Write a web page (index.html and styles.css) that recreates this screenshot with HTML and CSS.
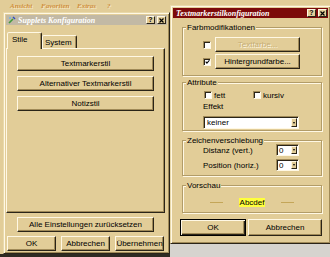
FILE: index.html
```html
<!DOCTYPE html>
<html lang="de">

<head>
  <meta charset="UTF-8">
  <title>Supplets Konfiguration</title>
  <link rel="stylesheet" href="styles.css">
</head>

<body>
  <div class="menubar">
    <span class="menu-item m1">Ansicht</span>
    <span class="menu-item m2">Favoriten</span>
    <span class="menu-item m3">Extras</span>
    <span class="menu-item">?</span>
  </div>
  <div class="desk-bottom">
    <div class="taskbar-edge"></div>
    <div class="page-grey"></div>
  </div>

  <!-- main dialog -->
  <div class="window config-window">
    <div class="titlebar inactive">
      <svg class="app-icon" width="8" height="8" viewBox="0 0 8 8">
        <path d="M1 7 L5 3" stroke="#3f9a3a" stroke-width="1.6" />
        <path d="M5 1 L7 3" stroke="#2f4fc0" stroke-width="1.4" />
        <circle cx="2" cy="2" r="1" fill="#6cb8e8" />
      </svg>
      <span class="title-text">Supplets Konfiguration</span>
      <span class="title-btn">?</span>
      <span class="title-btn">
        <svg width="5" height="5" viewBox="0 0 5 5"><path d="M0.5 0.5 L4.5 4.5 M4.5 0.5 L0.5 4.5" stroke="#000" stroke-width="1.2" /></svg>
      </span>
    </div>
    <div class="tabs">
      <div class="tab active">Stile</div>
      <div class="tab">System</div>
    </div>
    <div class="tab-panel">
      <button class="btn wide">Textmarkerstil</button>
      <button class="btn wide">Alternativer Textmarkerstil</button>
      <button class="btn wide">Notizstil</button>
    </div>
    <button class="btn wide reset">Alle Einstellungen zurücksetzen</button>
    <div class="dialog-buttons">
      <button class="btn small">OK</button>
      <button class="btn small">Abbrechen</button>
      <button class="btn small">Übernehmen</button>
    </div>
  </div>

  <!-- style dialog -->
  <div class="window style-window">
    <div class="titlebar active-title">
      <span class="title-text">Textmarkerstilkonfiguration</span>
      <span class="title-btn">?</span>
      <span class="title-btn">
        <svg width="5" height="5" viewBox="0 0 5 5"><path d="M0.5 0.5 L4.5 4.5 M4.5 0.5 L0.5 4.5" stroke="#000" stroke-width="1.2" /></svg>
      </span>
    </div>

    <div class="group colors">
      <span class="group-title">Farbmodifikationen</span>
      <div class="color-row">
        <span class="check"></span>
        <button class="btn color-btn disabled">Textfarbe...</button>
      </div>
      <div class="color-row">
        <span class="check">
          <svg width="6" height="6" viewBox="0 0 6 6"><path d="M0.8 2.6 L2.3 4.3 L5.3 0.9" stroke="#000" stroke-width="1.3" fill="none" /></svg>
        </span>
        <button class="btn color-btn">Hintergrundfarbe...</button>
      </div>
    </div>

    <div class="group attributes">
      <span class="group-title">Attribute</span>
      <div class="attr-row">
        <label class="check-label"><span class="check"></span>fett</label>
        <label class="check-label"><span class="check"></span>kursiv</label>
      </div>
      <div class="field-label">Effekt</div>
      <div class="select effect-select">
        <span class="select-value">keiner</span>
        <span class="select-arrow"></span>
      </div>
    </div>

    <div class="group offsets">
      <span class="group-title">Zeichenverschiebung</span>
      <div class="offset-row">
        <span class="offset-label">Distanz (vert.)</span>
        <div class="select num-select">
          <span class="select-value">0</span>
          <span class="select-arrow"></span>
        </div>
      </div>
      <div class="offset-row">
        <span class="offset-label">Position (horiz.)</span>
        <div class="select num-select">
          <span class="select-value">0</span>
          <span class="select-arrow"></span>
        </div>
      </div>
    </div>

    <div class="group preview-group">
      <span class="group-title">Vorschau</span>
      <div class="preview">
        <span class="preview-line"></span>
        <span class="preview-text">Abcdef</span>
        <span class="preview-line"></span>
      </div>
    </div>

    <div class="dialog-buttons right">
      <button class="btn default ok">OK</button>
      <button class="btn cancel">Abbrechen</button>
    </div>
  </div>
</body>

</html>
```

FILE: styles.css
```css
body {
  margin: 0;
  width: 330px;
  height: 257px;
  overflow: hidden;
  position: relative;
  display: flex;
  flex-direction: column;
  background-color: #e2cd98;
  font-family: "Liberation Sans", Arial, sans-serif;
  font-size: 8px;
  color: #000;
}

.menubar {
  height: 12px;
  display: flex;
  align-items: center;
  padding-left: 10px;
  font-family: "Liberation Serif", serif;
  font-style: italic;
  font-weight: bold;
  font-size: 7px;
  color: #cf8f3c;
  text-shadow: 1px 1px #f6e8c4;
}

.m1 {
  width: 31px;
}

.m2 {
  width: 36px;
}

.m3 {
  width: 30px;
}

.desk-bottom {
  margin-top: auto;
  height: 13px;
  display: flex;
  align-items: flex-end;
}

.taskbar-edge {
  width: 170px;
  height: 3px;
  background-color: #2e2a22;
}

.page-grey {
  flex: 1;
  height: 13px;
  background-color: #d6d4cf;
}

.window {
  position: absolute;
  box-sizing: border-box;
  background-color: #e2cd98;
  border: 1px solid;
  border-color: #e9d9aa #2a2418 #2a2418 #e9d9aa;
  box-shadow: inset 1px 1px #fff8e4, inset -1px -1px #a08a58;
  padding: 2px;
}

.config-window {
  left: 3px;
  top: 12px;
  width: 167px;
  height: 242px;
}

.style-window {
  left: 170px;
  top: 5px;
  width: 161px;
  height: 239px;
}

.titlebar {
  height: 10px;
  display: flex;
  align-items: center;
  padding: 0 1px 0 2px;
  color: #fff;
  font-family: "Liberation Serif", serif;
  font-weight: bold;
  font-style: italic;
  font-size: 8px;
}

.inactive {
  background-color: #c2b9a5;
}

.active-title {
  background-color: #7c0a0a;
}

.app-icon {
  margin-right: 1px;
}

.title-text {
  flex: 1;
  margin-left: 1px;
  white-space: nowrap;
  overflow: hidden;
}

.title-btn {
  width: 9px;
  height: 8px;
  box-sizing: border-box;
  margin-left: 2px;
  display: flex;
  align-items: center;
  justify-content: center;
  background-color: #e2cd98;
  border: 1px solid;
  border-color: #fff8e4 #2a2418 #2a2418 #fff8e4;
  color: #000;
  font-family: "Liberation Sans", Arial, sans-serif;
  font-style: normal;
  font-size: 7px;
  line-height: 6px;
}

.tabs {
  display: flex;
  align-items: flex-end;
  margin: 7px 0 0 1px;
}

.tab {
  box-sizing: border-box;
  width: 35px;
  height: 13px;
  padding-left: 2px;
  line-height: 13px;
  border: 1px solid;
  border-bottom: 0;
  border-color: #fff8e4 #2a2418 transparent #fff8e4;
  box-shadow: inset -1px 0 #a08a58;
  border-radius: 2px 2px 0 0;
  background-color: #e2cd98;
}

.tab.active {
  position: relative;
  z-index: 1;
  height: 17px;
  margin-bottom: -1px;
  padding-left: 4px;
  line-height: 14px;
}

.tab-panel {
  box-sizing: border-box;
  width: 159px;
  height: 165px;
  padding: 7px 0 0 10px;
  display: flex;
  flex-direction: column;
  gap: 5px;
  border: 1px solid;
  border-color: #fff8e4 #2a2418 #2a2418 #fff8e4;
  box-shadow: inset -1px -1px #a08a58;
}

.btn {
  box-sizing: border-box;
  height: 15px;
  padding: 0;
  margin: 0;
  background-color: #e2cd98;
  border: 1px solid;
  border-color: #fff8e4 #2a2418 #2a2418 #fff8e4;
  box-shadow: inset -1px -1px #a08a58;
  font-family: "Liberation Sans", Arial, sans-serif;
  font-size: 8px;
  line-height: 12px;
  color: #000;
  text-align: center;
  white-space: nowrap;
}

.btn.wide {
  width: 137px;
}

.reset {
  margin: 4px 0 0 11px;
}

.dialog-buttons {
  display: flex;
  gap: 5px;
  margin: 4px 0 0 1px;
}

.btn.small {
  width: 49px;
}

.dialog-buttons.right {
  gap: 2px;
  margin: 6px 0 0 7px;
}

.btn.ok {
  width: 66px;
  height: 17px;
}

.btn.cancel {
  width: 74px;
  height: 17px;
}

.btn.default {
  border-color: #000;
  box-shadow: inset 1px 1px #fff8e4, inset -1px -1px #2a2418, inset -2px -2px #a08a58;
}

.btn.disabled {
  color: #c6ad76;
  text-shadow: 1px 1px #fff8e4;
}

/* group boxes */
.group {
  position: relative;
  box-sizing: border-box;
  width: 140px;
  margin-left: 9px;
  border: 1px solid #b29c68;
  box-shadow: inset 1px 1px #fff8e4, 1px 1px #fff8e4;
}

.group-title {
  position: absolute;
  top: -5px;
  left: 3px;
  padding: 0 1px;
  line-height: 9px;
  background-color: #e2cd98;
}

.colors {
  height: 49px;
  margin-top: 9px;
  padding-top: 9px;
  display: flex;
  flex-direction: column;
  gap: 2px;
}

.color-row {
  display: flex;
  align-items: center;
  gap: 4px;
  margin-left: 20px;
}

.color-btn {
  width: 85px;
}

.check {
  box-sizing: border-box;
  width: 8px;
  height: 8px;
  display: flex;
  align-items: center;
  justify-content: center;
  background-color: #fff;
  border: 1px solid;
  border-color: #a08a58 #fff8e4 #fff8e4 #a08a58;
  box-shadow: inset 1px 1px #2a2418;
}

.check svg {
  margin: 1px 0 0 1px;
}

.attributes {
  height: 49px;
  margin-top: 6px;
  padding-top: 7px;
}

.attr-row {
  height: 10px;
  display: flex;
  align-items: center;
  margin-left: 21px;
}

.check-label {
  width: 49px;
  display: flex;
  align-items: center;
  gap: 2px;
}

.field-label {
  margin: 2px 0 0 20px;
  line-height: 10px;
}

.select {
  box-sizing: border-box;
  display: flex;
  background-color: #fff;
  border: 1px solid;
  border-color: #a08a58 #fff8e4 #fff8e4 #a08a58;
  box-shadow: inset 1px 1px #2a2418;
}

.effect-select {
  width: 96px;
  height: 13px;
  margin: 4px 0 0 20px;
}

.select-value {
  flex: 1;
  padding: 1px 0 0 3px;
  line-height: 10px;
}

.select-arrow {
  position: relative;
  width: 6px;
  margin: 1px 1px 1px 0;
  box-sizing: border-box;
  background-color: #e2cd98;
  border: 1px solid;
  border-color: #fff8e4 #2a2418 #2a2418 #fff8e4;
}

.select-arrow::after {
  content: "";
  position: absolute;
  left: 1px;
  top: 50%;
  margin-top: -1px;
  border-left: 1.5px solid transparent;
  border-right: 1.5px solid transparent;
  border-top: 2px solid #000;
}

.offsets {
  height: 36px;
  margin-top: 9px;
  padding-top: 3px;
  display: flex;
  flex-direction: column;
  gap: 3px;
}

.offset-row {
  height: 12px;
  display: flex;
  align-items: center;
  margin-left: 20px;
}

.offset-label {
  width: 73px;
}

.num-select {
  width: 23px;
  height: 12px;
}

.num-select .select-value {
  padding-left: 2px;
}

.preview-group {
  height: 28px;
  margin-top: 9px;
  padding-top: 11px;
}

.preview {
  height: 10px;
  display: flex;
  align-items: center;
  justify-content: center;
  gap: 16px;
}

.preview-line {
  width: 13px;
  height: 1px;
  background-color: #c4a658;
}

.preview-text {
  background-color: #ffff3c;
  line-height: 9px;
  padding: 0 1px;
}
```
